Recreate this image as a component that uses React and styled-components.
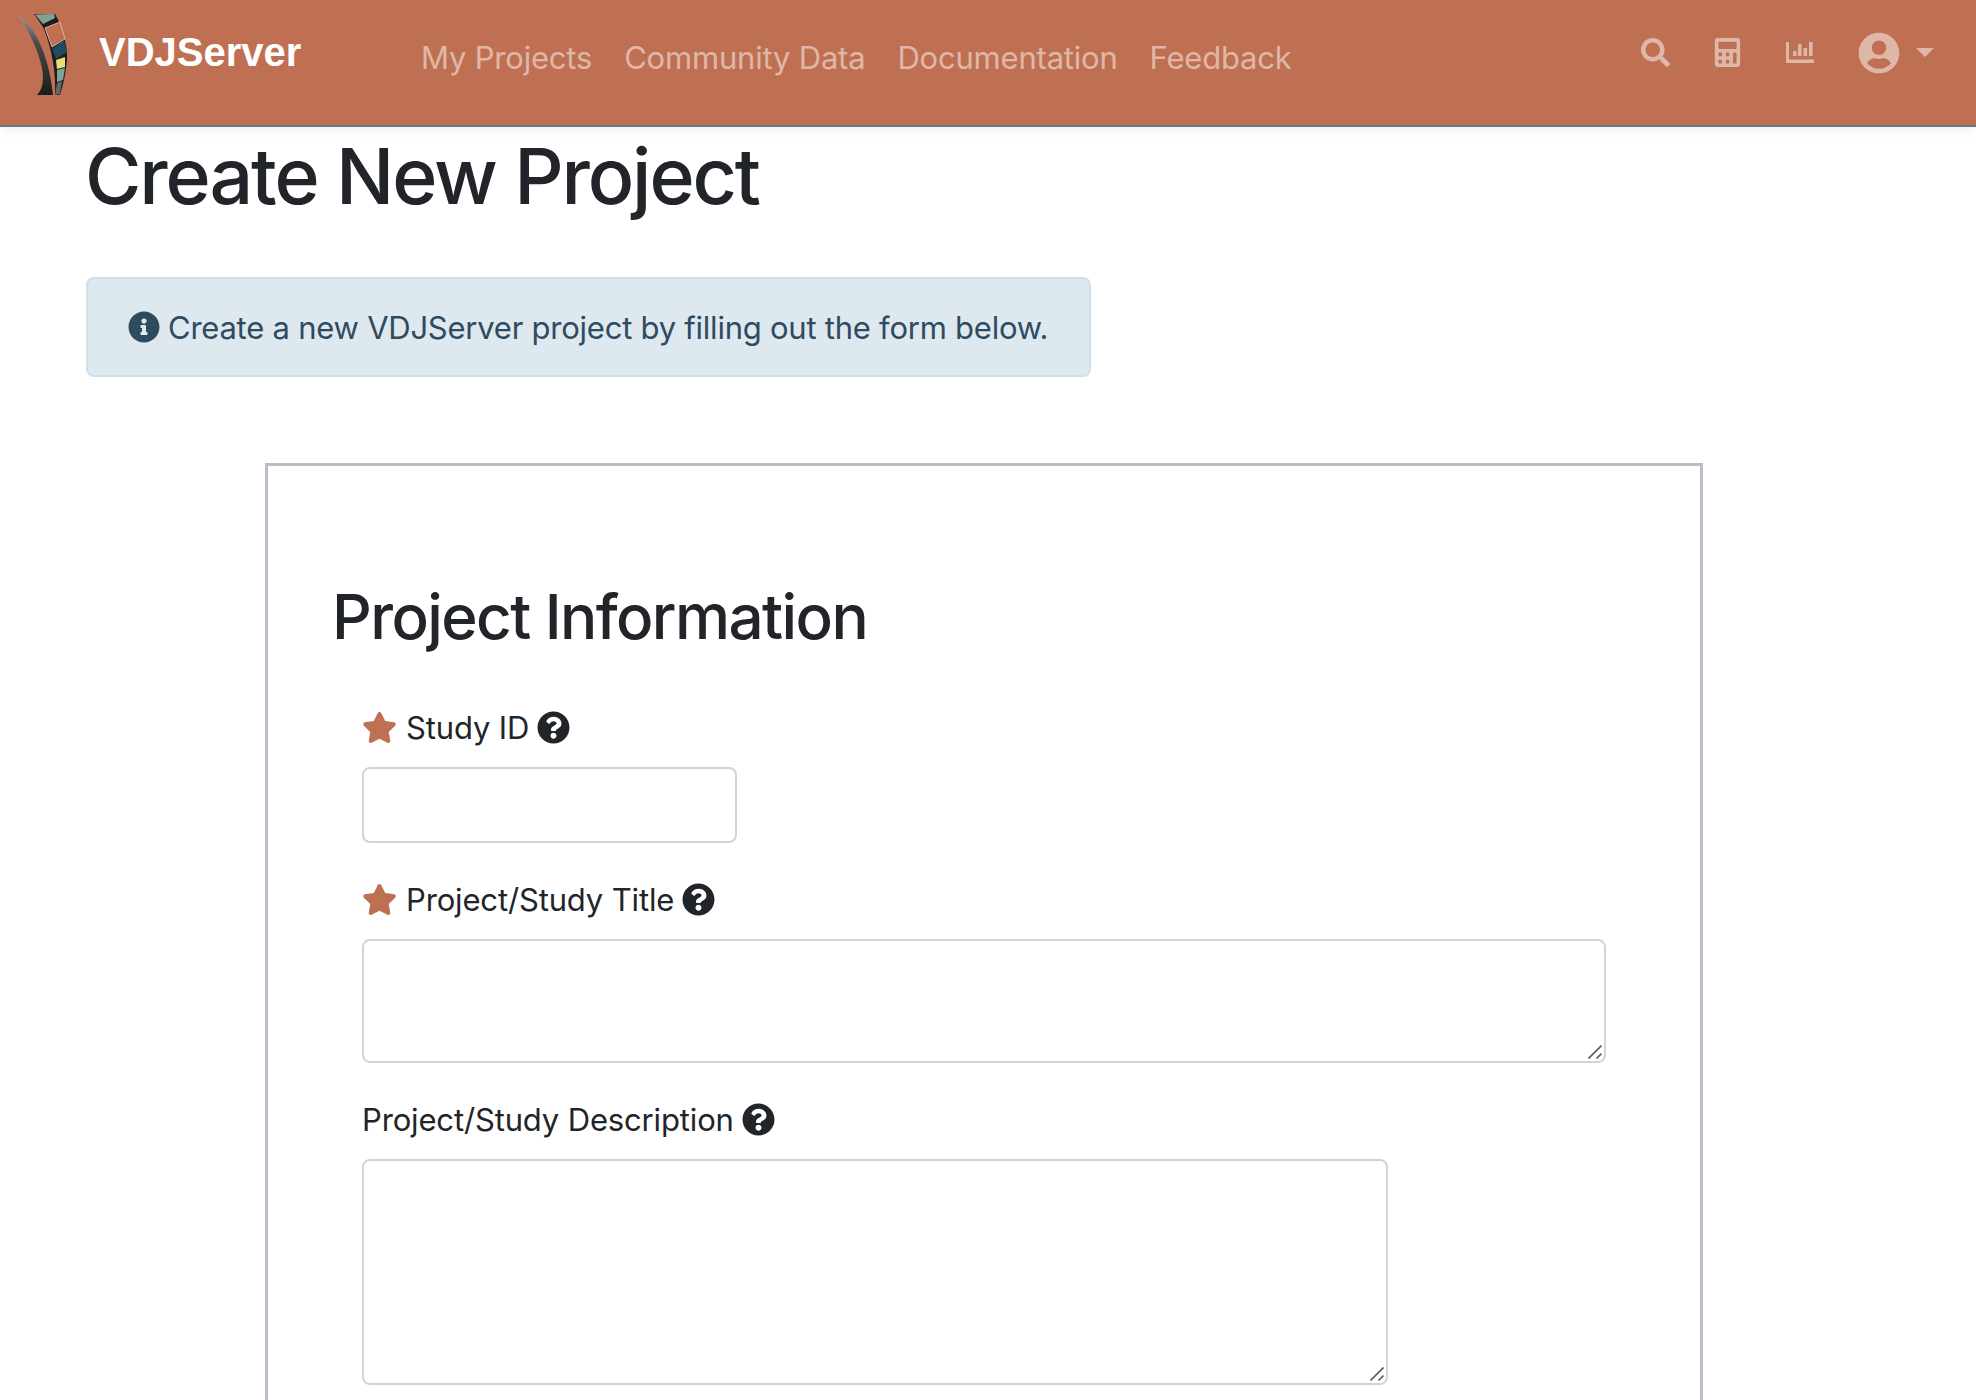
import styled, { createGlobalStyle } from "styled-components";
import {
  FaSearch,
  FaCalculator,
  FaUserCircle,
  FaInfoCircle,
  FaStar,
  FaQuestionCircle,
} from "react-icons/fa";

const GlobalStyle = createGlobalStyle`
  html, body {
    margin: 0;
    height: 100%;
    overflow: hidden;
    background: #fff;
    font-family: Inter, "Liberation Sans", sans-serif;
    color: #212529;
  }
  * { box-sizing: border-box; }
`;

const NAV_LINKS = ["My Projects", "Community Data", "Documentation", "Feedback"];

const Logo = () => (
  <LogoSvg viewBox="0 0 50 84" aria-hidden="true">
    <defs>
      <linearGradient id="blade" x1="0" y1="0" x2="0" y2="1">
        <stop offset="0" stopColor="#9a9a9a" />
        <stop offset="0.35" stopColor="#4a4a4a" />
        <stop offset="1" stopColor="#1c1c1c" />
      </linearGradient>
    </defs>
    <path d="M0 2 C14 12 30 35 35 82 L19 82 C25 76 26 66 24 55 C20 36 10 16 0 2 Z" fill="url(#blade)" />
    <path d="M16 1 L37 1 C44 14 50 32 49 47 C48 60 45 72 42 82 L37 82 C38 60 34 35 25 14 Z" fill="#1d1d1d" />
    <path d="M17 1.5 L36 1 L37 5 L25 11 Z" fill="#7fa294" />
    <path d="M27 15 L42 9 L47 26 L34 34 Z" fill="#bf6f52" stroke="#e9cdbf" strokeWidth="0.8" />
    <path d="M34 36 L46 27 L49 39 L38 46 Z" fill="#1f4a5f" />
    <path d="M38 47 L47 44 L47 54 L39 56 Z" fill="#e6df78" />
    <path d="M39 57 L47 55 L45 67 L39 69 Z" fill="#7fa294" />
    <path d="M39 70 L44 68 L42 81 L37 82 Z" fill="#666" />
  </LogoSvg>
);

const ChartIcon = () => (
  <ChartSvg viewBox="0 0 28 21" aria-hidden="true">
    <path d="M0 0h3v17.5h25V21H0z" />
    <rect x="7" y="9" width="3.6" height="5" rx="0.5" />
    <rect x="12" y="2" width="3.6" height="12" rx="0.5" />
    <rect x="17.5" y="6" width="3.6" height="8" rx="0.5" />
    <rect x="23" y="0" width="3.6" height="14" rx="0.5" />
  </ChartSvg>
);

const FieldLabel = ({ required, children }) => (
  <LabelRow>
    {required && <RequiredStar />}
    <span>{children}</span>
    <HelpIcon />
  </LabelRow>
);

const ResizableArea = ({ width, height }) => (
  <AreaWrap $width={width} $height={height}>
    <TextArea />
    <Grip viewBox="0 0 14 14" aria-hidden="true">
      <path d="M0.5 13.5 L13.5 0.5 M8.5 13.5 L13.5 8.5" />
    </Grip>
  </AreaWrap>
);

export default function App() {
  return (
    <>
      <GlobalStyle />
      <Header>
        <Brand>
          <Logo />
          <BrandName>VDJServer</BrandName>
        </Brand>
        <Nav>
          {NAV_LINKS.map((link) => (
            <NavLink key={link}>{link}</NavLink>
          ))}
        </Nav>
        <IconBar>
          <SearchIcon />
          <CalcIcon />
          <ChartIcon />
          <UserMenu>
            <UserIcon />
            <Caret />
          </UserMenu>
        </IconBar>
      </Header>
      <Main>
        <Title>Create New Project</Title>
        <Alert>
          <FaInfoCircle />
          <span>Create a new VDJServer project by filling out the form below.</span>
        </Alert>
        <Panel>
          <PanelTitle>Project Information</PanelTitle>
          <Field>
            <FieldLabel required>Study ID</FieldLabel>
            <TextInput />
          </Field>
          <Field>
            <FieldLabel required>Project/Study Title</FieldLabel>
            <ResizableArea width={1244} height={124} />
          </Field>
          <Field>
            <FieldLabel>Project/Study Description</FieldLabel>
            <ResizableArea width={1026} height={226} />
          </Field>
        </Panel>
      </Main>
    </>
  );
}

const Header = styled.header`
  position: relative;
  display: flex;
  align-items: center;
  height: 127px;
  padding: 0 42px 20px 18px;
  background: #bf6f52;
  border-bottom: 2px solid #6c7686;
  box-shadow: 0 3px 10px rgba(0, 0, 0, 0.07);
`;

const Brand = styled.div`
  display: flex;
  align-items: center;
  width: 403px;
`;

const LogoSvg = styled.svg`
  width: 50px;
  height: 84px;
  margin-right: 31px;
  margin-top: 4px;
`;

const BrandName = styled.span`
  font-family: "Liberation Sans", Arial, sans-serif;
  font-weight: 700;
  font-size: 40px;
  color: #fff;
`;

const Nav = styled.nav`
  display: flex;
  gap: 32px;
  margin-top: 10px;
`;

const NavLink = styled.a`
  font-size: 31px;
  line-height: 48px;
  letter-spacing: -0.2px;
  color: rgba(255, 255, 255, 0.5);
`;

const IconBar = styled.div`
  display: flex;
  align-items: center;
  margin-left: auto;
  color: rgba(255, 255, 255, 0.5);
`;

const SearchIcon = styled(FaSearch)`
  font-size: 29px;
  margin-right: 43px;
`;

const CalcIcon = styled(FaCalculator)`
  font-size: 29px;
  margin-right: 44px;
`;

const ChartSvg = styled.svg`
  width: 28px;
  height: 21px;
  margin-right: 44px;
  fill: currentColor;
`;

const UserMenu = styled.div`
  display: flex;
  align-items: center;
  gap: 16px;
`;

const UserIcon = styled(FaUserCircle)`
  font-size: 42px;
`;

const Caret = styled.span`
  width: 0;
  height: 0;
  border-left: 9px solid transparent;
  border-right: 9px solid transparent;
  border-top: 9px solid rgba(255, 255, 255, 0.5);
`;

const Main = styled.main`
  padding-left: 86px;
`;

const Title = styled.h1`
  margin: 1px 0 53px -1px;
  font-size: 77px;
  font-weight: 530;
  line-height: 96px;
  letter-spacing: -2.1px;
`;

const Alert = styled.div`
  display: inline-flex;
  align-items: center;
  gap: 8px;
  height: 100px;
  padding: 0 41px 0 40px;
  font-size: 31px;
  letter-spacing: -0.24px;
  color: #2f4b60;
  background: #dee8ef;
  border: 2px solid #d0dfe8;
  border-radius: 8px;

  svg {
    font-size: 32px;
  }
`;

const Panel = styled.section`
  width: 1438px;
  height: 1000px;
  margin: 86px 0 0 179px;
  padding: 112px 65px 0;
  border: 3px solid #b8bfca;
`;

const PanelTitle = styled.h2`
  margin: 0 0 48px -1px;
  font-size: 62px;
  font-weight: 530;
  line-height: 77px;
  letter-spacing: -1.6px;
`;

const Field = styled.div`
  margin: 0 0 32px 29px;
`;

const LabelRow = styled.label`
  display: flex;
  align-items: center;
  gap: 8px;
  height: 48px;
  margin-bottom: 16px;
  font-size: 31px;
  letter-spacing: -0.15px;
`;

const RequiredStar = styled(FaStar)`
  font-size: 35px;
  color: #bf6f52;
  margin-right: 1px;
`;

const HelpIcon = styled(FaQuestionCircle)`
  font-size: 33px;
`;

const TextInput = styled.input`
  display: block;
  width: 375px;
  height: 76px;
  border: 2px solid #ced4da;
  border-radius: 8px;
`;

const AreaWrap = styled.div`
  position: relative;
  width: ${(p) => p.$width}px;
  height: ${(p) => p.$height}px;
`;

const TextArea = styled.textarea`
  display: block;
  width: 100%;
  height: 100%;
  resize: none;
  border: 2px solid #ced4da;
  border-radius: 8px;
`;

const Grip = styled.svg`
  position: absolute;
  right: 4px;
  bottom: 4px;
  width: 14px;
  height: 14px;
  fill: none;
  stroke: #5c5c5c;
  stroke-width: 1.6;
`;
